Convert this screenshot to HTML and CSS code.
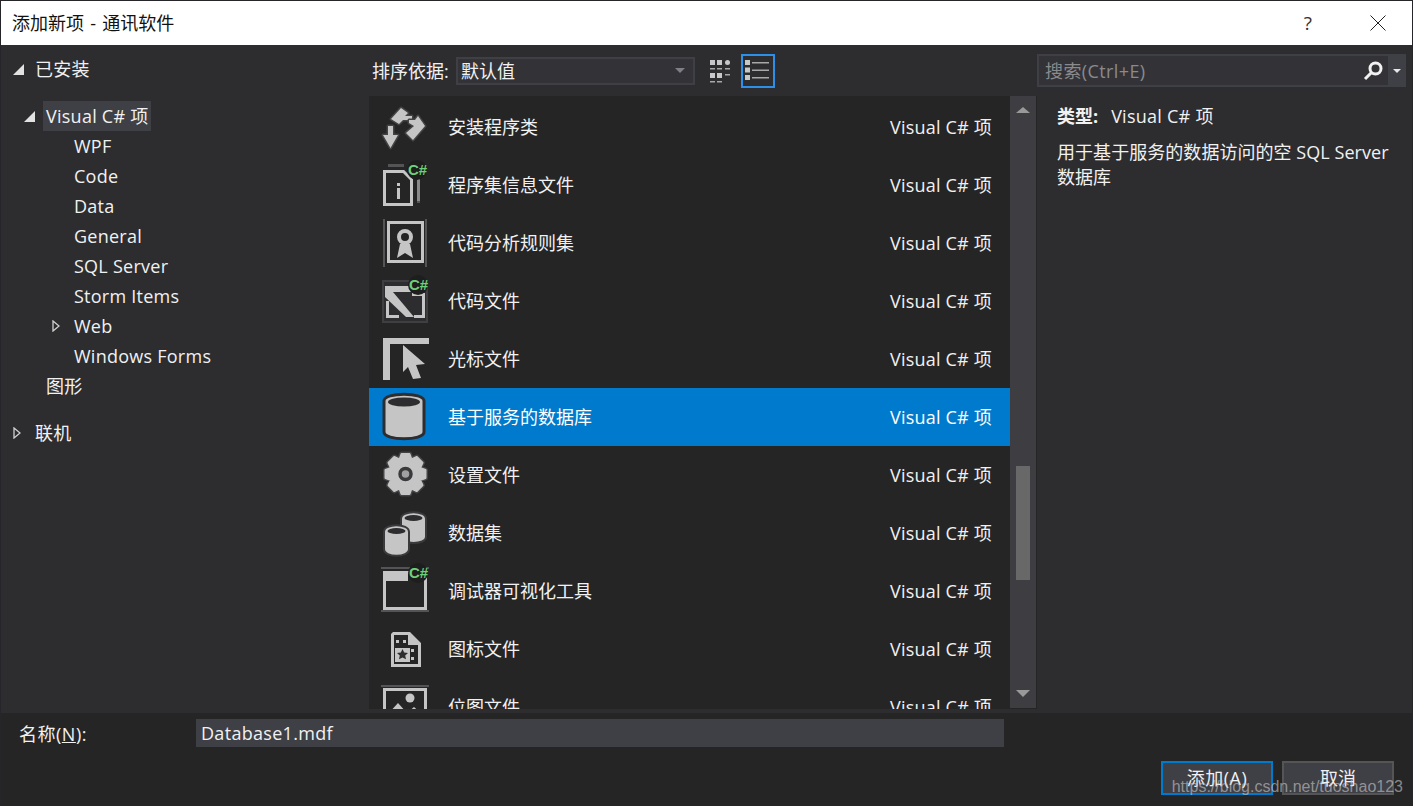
FILE: index.html
```html
<!DOCTYPE html>
<html lang="zh-CN">
<head>
  <meta charset="UTF-8">
  <title>添加新项 - 通讯软件</title>
  <link rel="stylesheet" href="styles.css">
</head>
<body>
  <div class="dialog">

    <div class="titlebar">
      <span class="title">添加新项 - 通讯软件</span>
      <span class="help">?</span>
      <svg class="close" viewBox="0 0 16 16"><path d="M0.5 0.5 L15.5 15.5 M15.5 0.5 L0.5 15.5"/></svg>
    </div>

    <div class="main">
      <!-- tree -->
      <div class="tree">
        <div class="node node-top"><svg class="arrow" viewBox="0 0 11 11"><polygon class="arrow-open" points="11,0 11,11 0,11"/></svg><span>已安装</span></div>
        <div class="node node-group"><svg class="arrow" viewBox="0 0 11 11"><polygon class="arrow-open" points="11,0 11,11 0,11"/></svg><span class="selected">Visual C# 项</span></div>
        <div class="node node-leaf">WPF</div>
        <div class="node node-leaf">Code</div>
        <div class="node node-leaf">Data</div>
        <div class="node node-leaf">General</div>
        <div class="node node-leaf">SQL Server</div>
        <div class="node node-leaf">Storm Items</div>
        <div class="node node-web"><svg class="arrow" viewBox="0 0 8 12"><polygon class="arrow-closed" points="1,1 7,6 1,11"/></svg><span>Web</span></div>
        <div class="node node-leaf">Windows Forms</div>
        <div class="node node-sub">图形</div>
        <div class="node node-online"><svg class="arrow" viewBox="0 0 8 12"><polygon class="arrow-closed" points="1,1 7,6 1,11"/></svg><span>联机</span></div>
      </div>

      <!-- center -->
      <div class="center">
        <div class="toolbar">
          <span class="sort-label">排序依据:</span>
          <div class="select"><span>默认值</span><i class="caret"></i></div>
          <svg class="view-grid" viewBox="0 0 20 24">
            <path d="M0 1h5v5H0zM7 1h5v5H7zM0 14h5v5H0zM7 14h5v5H7z"/>
            <circle cx="17.500" cy="3.500" r="2.500"/>
            <path class="view-thin" d="M0 9h5v1.500H0zM7 9h5v1.500H7zM15 9h5v1.500h-5zM0 22h5v1.500H0zM7 22h5v1.500H7zM15 15h5v1.500h-5z"/>
          </svg>
          <div class="view-list">
            <svg viewBox="0 0 28 26">
              <path d="M1 2h5v5H1zM1 9.500h5v5H1zM1 17h5v5H1z"/>
              <path class="view-thin" d="M8 4h17v1.500H8zM8 11.500h17v1.500H8zM8 19h17v1.500H8z"/>
            </svg>
          </div>
        </div>

        <div class="list-wrap">
          <div class="list">
            <div class="item">
              <svg class="icon" viewBox="0 0 48 48">
                <path class="ink-halo" d="M7 23h5v9h5L9.500 45 2 32h5z"/>
                <path class="ink-halo" d="M10 16 L20 5 L27 10 L24 13 L31 13 L31 17 L22 17 L18 21 Z"/>
                <path class="ink-halo" d="M37 13 L44 23 L32 37 L25 30 L33 23 L28 20 L28 17 L34 17 Z"/>
              </svg>
              <span class="name">安装程序类</span><span class="kind">Visual C# 项</span>
            </div>
            <div class="item">
              <svg class="icon" viewBox="0 0 48 48">
                <path class="dim" d="M7 3h16v3H7zM36 12h3v30h-3z"/>
                <path class="ink-thin" d="M36 14h3v26h-3z"/>
                <path class="line" d="M3.500 10.500h19l8 8v25h-27z"/>
                <path class="ink" d="M16 22h3v3h-3zM16 27h3v11h-3z"/>
                <circle class="badge" cx="36" cy="9" r="10"/>
                <text class="csharp" x="27" y="14">C#</text>
              </svg>
              <span class="name">程序集信息文件</span><span class="kind">Visual C# 项</span>
            </div>
            <div class="item">
              <svg class="icon" viewBox="0 0 48 48">
                <path class="dim" d="M2 0h2v48H2zM44 0h2v48h-2z"/>
                <rect class="line" x="7.500" y="3.500" width="34" height="39"/>
                <circle class="ring" cx="24" cy="18" r="6"/>
                <path class="ink" d="M19 25h10l3 14-8-5-8 5z"/>
              </svg>
              <span class="name">代码分析规则集</span><span class="kind">Visual C# 项</span>
            </div>
            <div class="item">
              <svg class="icon" viewBox="0 0 48 48">
                <rect class="dim-line" x="2" y="4" width="44" height="41"/>
                <path class="ink" d="M4 9H30V15H4z"/>
                <path class="ink" d="M4 15 L12 15 L33 40 H25 L4 20z"/>
                <path class="ink" d="M5 24h3v14h10v3H5zM31 16h13v25H33v-3h8V19H31z"/>
                <circle class="badge" cx="37" cy="8" r="10"/>
                <text class="csharp" x="28" y="13">C#</text>
              </svg>
              <span class="name">代码文件</span><span class="kind">Visual C# 项</span>
            </div>
            <div class="item">
              <svg class="icon" viewBox="0 0 48 48">
                <path class="ink" d="M2 3h46v6H9v36H2z"/>
                <path class="ink" d="M22 10 L44 29 L35 30 L40 43 L32 44 L27 32 L22 37 Z"/>
              </svg>
              <span class="name">光标文件</span><span class="kind">Visual C# 项</span>
            </div>
            <div class="item active">
              <svg class="icon" viewBox="0 0 48 48">
                <path class="cyl" d="M3 8 C3 -1 43 -1 43 8 V39 C43 48 3 48 3 39 Z"/>
                <ellipse class="cyl-top" cx="23" cy="9" rx="16" ry="4.500"/>
              </svg>
              <span class="name">基于服务的数据库</span><span class="kind">Visual C# 项</span>
            </div>
            <div class="item">
              <svg class="icon" viewBox="0 0 48 48">
                <g transform="translate(24.500 23)">
                  <polygon class="gear-halo" points="-4,-20 4,-20 6,-14.500 11.300,-17 17,-11.300 14.500,-6 20,-4 20,4 14.500,6 17,11.300 11.300,17 6,14.500 4,20 -4,20 -6,14.500 -11.300,17 -17,11.300 -14.500,6 -20,4 -20,-4 -14.500,-6 -17,-11.300 -11.300,-17 -6,-14.500"/>
                  <polygon class="gear" points="-4,-20 4,-20 6,-14.500 11.300,-17 17,-11.300 14.500,-6 20,-4 20,4 14.500,6 17,11.300 11.300,17 6,14.500 4,20 -4,20 -6,14.500 -11.300,17 -17,11.300 -14.500,6 -20,4 -20,-4 -14.500,-6 -17,-11.300 -11.300,-17 -6,-14.500"/>
                  <circle class="gear-hole" r="5.500"/>
                </g>
              </svg>
              <span class="name">设置文件</span><span class="kind">Visual C# 项</span>
            </div>
            <div class="item">
              <svg class="icon" viewBox="0 0 48 48">
                <path class="cyl-small" d="M20 10 C20 1 45 1 45 10 V28 C45 36 20 36 20 28 Z"/>
                <ellipse class="cyl-top" cx="32.500" cy="9" rx="9" ry="3"/>
                <path class="cyl-small" d="M3 23 C3 14 28 14 28 23 V40 C28 49 3 49 3 40 Z"/>
                <ellipse class="cyl-top" cx="15.500" cy="22" rx="9" ry="3"/>
              </svg>
              <span class="name">数据集</span><span class="kind">Visual C# 项</span>
            </div>
            <div class="item">
              <svg class="icon" viewBox="0 0 48 48">
                <path class="dim" d="M0 0h48v2H0zM0 43h48v2H0z"/>
                <rect class="line" x="3.500" y="5.500" width="41" height="36"/>
                <path class="ink" d="M3 5h24v9H3z"/>
                <circle class="badge" cx="37" cy="6" r="10"/>
                <text class="csharp" x="28" y="11">C#</text>
              </svg>
              <span class="name">调试器可视化工具</span><span class="kind">Visual C# 项</span>
            </div>
            <div class="item">
              <svg class="icon" viewBox="0 0 48 48">
                <path class="ink" fill-rule="evenodd" d="M12 7h17l11 11v24H10V9zM13 10v29h24V20h-10V10z"/>
                <path class="ink" d="M15 15h3v3h-3zM22 15h3v3h-3zM30 24h3v3h-3zM30 32h3v3h-3zM14 23h15v14H14z"/>
                <path class="star" d="M21.500 24l1.700 3.500 3.800.4-2.800 2.600.8 3.800-3.500-1.900-3.500 1.900.8-3.800-2.800-2.600 3.800-.4z"/>
              </svg>
              <span class="name">图标文件</span><span class="kind">Visual C# 项</span>
            </div>
            <div class="item">
              <svg class="icon" viewBox="0 0 48 48">
                <path class="dim" d="M0 2h48v2H0z"/>
                <rect class="line" x="3.500" y="6.500" width="41" height="36"/>
                <circle class="ink-shape" cx="29" cy="15" r="4.500"/>
                <path class="ink" d="M6 32 L17 20 L26 30 L33 24 L42 32 V40 H6 Z"/>
              </svg>
              <span class="name">位图文件</span><span class="kind">Visual C# 项</span>
            </div>
          </div>

          <div class="scrollbar">
            <i class="sb-up"></i>
            <div class="sb-thumb"></div>
            <i class="sb-down"></i>
          </div>
        </div>
      </div>

      <!-- details -->
      <div class="side">
        <div class="search">
          <span class="search-text">搜索(Ctrl+E)</span>
          <svg class="search-icon" viewBox="0 0 20 20">
            <circle cx="12.500" cy="7.500" r="5.500"/>
            <path d="M8.500 11.500 L2 18"/>
          </svg>
          <div class="search-drop"><i class="caret-light"></i></div>
        </div>
        <div class="details">
          <div class="type-row"><b>类型:</b><span>Visual C# 项</span></div>
          <p class="desc">用于基于服务的数据访问的空 SQL Server 数据库</p>
        </div>
      </div>
    </div>

    <div class="footer">
      <div class="name-row">
        <label class="name-label">名称(<u>N</u>):</label>
        <div class="name-input">Database1.mdf</div>
      </div>
      <div class="buttons">
        <div class="btn btn-default">添加(A)</div>
        <div class="btn">取消</div>
      </div>
    </div>

    <div class="watermark">https://blog.csdn.net/tuoshao123</div>
  </div>
</body>
</html>
```

FILE: styles.css
```css
* {
  box-sizing: border-box;
}

html, body {
  margin: 0;
  height: 100%;
  overflow: hidden;
}

body {
  background-color: #2d2d30;
  color: #f1f1f1;
  font-family: "Open Sans", "Noto Sans CJK SC", sans-serif;
  font-size: 18px;
  line-height: 24px;
}

.dialog {
  position: relative;
  width: 1413px;
  height: 806px;
  display: flex;
  flex-direction: column;
  border: 1px solid #26262a;
  border-bottom: none;
}

/* ---------- title ---------- */
.titlebar {
  height: 44px;
  flex: none;
  background-color: #fff;
  color: #111;
  display: flex;
  align-items: center;
  padding: 0 26px 0 11px;
}

.title {
  flex: 1;
  word-spacing: 1.500px;
}

.help {
  margin-right: 58px;
  color: #333;
  font-size: 19px;
}

.close {
  width: 16px;
  height: 16px;
  fill: none;
  stroke: #222;
  stroke-width: 1;
}

/* ---------- main ---------- */
.main {
  height: 668px;
  flex: none;
  display: flex;
}

.tree {
  width: 367px;
  flex: none;
  padding-top: 9px;
}

.node {
  height: 30px;
  display: flex;
  align-items: center;
  white-space: nowrap;
  letter-spacing: 0.250px;
}

.node-top {
  padding-left: 12px;
}

.node-top .arrow {
  width: 11px;
  height: 11px;
  margin-right: 11px;
}

.node-group {
  margin-top: 17px;
  padding-left: 23px;
}

.node-group .arrow {
  width: 11px;
  height: 11px;
  margin-right: 8px;
}

.selected {
  background-color: #3f3f46;
  height: 30px;
  line-height: 30px;
  padding: 0 2px 0 3px;
}

.node-leaf {
  padding-left: 73px;
}

.node-web {
  padding-left: 51px;
}

.node-web .arrow,
.node-online .arrow {
  width: 8px;
  height: 12px;
}

.node-web .arrow {
  margin-right: 14px;
}

.node-sub {
  padding-left: 45px;
}

.node-online {
  margin-top: 17px;
  padding-left: 12px;
}

.node-online .arrow {
  margin-right: 14px;
}

.arrow-open {
  fill: #e2e2e2;
}

.arrow-closed {
  fill: #2d2d30;
  stroke: #d0d0d0;
  stroke-width: 1.300;
}

/* ---------- center ---------- */
.center {
  width: 669px;
  flex: none;
  display: flex;
  flex-direction: column;
  padding-left: 1px;
}

.toolbar {
  height: 51px;
  flex: none;
  display: flex;
  align-items: center;
  padding-left: 3px;
}

.sort-label {
  width: 84px;
  flex: none;
  white-space: nowrap;
}

.select {
  width: 239px;
  height: 28px;
  flex: none;
  background-color: #333337;
  border: 2px solid #3f3f46;
  display: flex;
  align-items: center;
  justify-content: space-between;
  padding: 0 8px 0 3px;
}

.caret {
  width: 0;
  height: 0;
  border-left: 5px solid transparent;
  border-right: 5px solid transparent;
  border-top: 5px solid #7f7f85;
}

.view-grid {
  width: 20px;
  height: 24px;
  margin-left: 15px;
  fill: #c8c8c8;
}

.view-thin {
  fill: #a8a8a8;
}

.view-list {
  width: 34px;
  height: 34px;
  margin-left: 11px;
  border: 2px solid #2e8fe8;
  display: flex;
  align-items: center;
  justify-content: center;
}

.view-list svg {
  width: 28px;
  height: 26px;
  fill: #c8c8c8;
}

.list-wrap {
  height: 613px;
  flex: none;
  display: flex;
}

.list {
  width: 641px;
  flex: none;
  background-color: #252526;
  padding-top: 2px;
  overflow: hidden;
}

.item {
  height: 58px;
  display: flex;
  align-items: center;
  padding: 0 18px 0 12px;
  white-space: nowrap;
}

.item.active {
  background-color: #007acc;
  color: #fff;
}

.icon {
  width: 48px;
  height: 48px;
  flex: none;
  overflow: visible;
}

.name {
  flex: 1;
  margin-left: 19px;
}

.kind {
  letter-spacing: 0.200px;
}

.ink {
  fill: #c5c5c5;
}

.ink-shape {
  fill: #c5c5c5;
}

.ink-thin {
  fill: #8a8a8a;
}

.ink-halo {
  fill: #c5c5c5;
  stroke: #434346;
  stroke-width: 3;
  stroke-linejoin: round;
  paint-order: stroke;
}

.star {
  fill: #2d2d30;
}

.dim {
  fill: #545457;
}

.dim-line {
  fill: #2d2d30;
  stroke: #3f3f42;
  stroke-width: 2;
}

.line {
  fill: #252526;
  stroke: #c5c5c5;
  stroke-width: 3;
}

.ring {
  fill: #252526;
  stroke: #c5c5c5;
  stroke-width: 4;
}

.badge {
  fill: #1e1e1e;
}

.csharp {
  fill: #6fd07c;
  font-family: "Liberation Sans", sans-serif;
  font-size: 15px;
  font-weight: bold;
}

.cyl {
  fill: #c5c5c5;
  stroke: #2d2d30;
  stroke-width: 3;
}

.cyl-small {
  fill: #c5c5c5;
  stroke: #3a3a3d;
  stroke-width: 2;
}

.cyl-top {
  fill: #2d2d30;
}

.gear {
  fill: #c5c5c5;
  stroke: #c5c5c5;
  stroke-width: 2;
  stroke-linejoin: round;
}

.gear-halo {
  fill: #434346;
  stroke: #434346;
  stroke-width: 5;
  stroke-linejoin: round;
}

.gear-hole {
  fill: #a0a0a0;
  stroke: #3a3a3d;
  stroke-width: 3.500;
}

.scrollbar {
  width: 27px;
  flex: none;
  background-color: #3e3e42;
  border-right: 1px solid #252526;
  border-bottom: 1px solid #252526;
  position: relative;
}

.sb-up,
.sb-down {
  position: absolute;
  left: 6px;
  width: 0;
  height: 0;
  border-left: 7px solid transparent;
  border-right: 7px solid transparent;
}

.sb-up {
  top: 11px;
  border-bottom: 6px solid #999;
}

.sb-down {
  bottom: 11px;
  border-top: 7px solid #999;
}

.sb-thumb {
  position: absolute;
  left: 6px;
  top: 370px;
  width: 14px;
  height: 114px;
  background-color: #686868;
}

/* ---------- side ---------- */
.side {
  flex: 1;
  min-width: 0;
}

.search {
  width: 369px;
  height: 33px;
  margin-top: 9px;
  background-color: #333337;
  border: 2px solid #3f3f46;
  border-right: none;
  display: flex;
  align-items: center;
}

.search-text {
  flex: 1;
  padding-left: 6px;
  color: #8a8a8d;
  letter-spacing: 0.400px;
}

.search-icon {
  width: 20px;
  height: 20px;
  margin-right: 5px;
  fill: none;
  stroke: #f1f1f1;
  stroke-width: 3;
}

.search-drop {
  width: 18px;
  height: 100%;
  background-color: #3f3f46;
  display: flex;
  align-items: center;
  justify-content: center;
}

.caret-light {
  width: 0;
  height: 0;
  border-left: 4px solid transparent;
  border-right: 4px solid transparent;
  border-top: 4px solid #e8e8e8;
}

.details {
  padding: 17px 20px 0 20px;
}

.type-row b {
  margin-right: 13px;
}

.type-row span {
  letter-spacing: 0.250px;
}

.desc {
  margin: 12px 0 0;
  width: 345px;
  line-height: 25px;
  letter-spacing: 0.050px;
}

/* ---------- footer ---------- */
.footer {
  flex: 1;
  background-color: #252526;
  padding: 6px 18px 0 18px;
  position: relative;
}

.name-row {
  display: flex;
  align-items: center;
}

.name-label {
  width: 177px;
  flex: none;
  padding-top: 2px;
  letter-spacing: 0.500px;
}

.name-input {
  width: 808px;
  height: 28px;
  background-color: #3f3f46;
  padding-left: 5px;
  line-height: 28px;
  font-size: 18px;
  letter-spacing: 0.300px;
}

.buttons {
  display: flex;
  justify-content: flex-end;
  gap: 9px;
  margin-top: 14px;
}

.btn {
  width: 112px;
  height: 34px;
  background-color: #3f3f46;
  border: 2px solid #555;
  text-align: center;
  line-height: 30px;
}

.btn-default {
  border-color: #007acc;
  letter-spacing: 0.500px;
}

.watermark {
  position: absolute;
  right: 9px;
  bottom: 9px;
  font-family: "Liberation Sans", sans-serif;
  font-size: 16px;
  line-height: 20px;
  color: rgba(200, 200, 200, 0.62);
  white-space: nowrap;
}
```
